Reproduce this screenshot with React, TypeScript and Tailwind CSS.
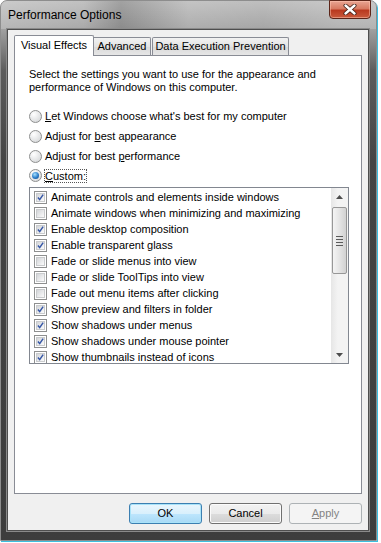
import React from 'react';

const items: { label: string; on: boolean }[] = [
  { label: 'Animate controls and elements inside windows', on: true },
  { label: 'Animate windows when minimizing and maximizing', on: false },
  { label: 'Enable desktop composition', on: true },
  { label: 'Enable transparent glass', on: true },
  { label: 'Fade or slide menus into view', on: false },
  { label: 'Fade or slide ToolTips into view', on: false },
  { label: 'Fade out menu items after clicking', on: false },
  { label: 'Show preview and filters in folder', on: true },
  { label: 'Show shadows under menus', on: true },
  { label: 'Show shadows under mouse pointer', on: true },
  { label: 'Show thumbnails instead of icons', on: true },
];

const CheckBox = ({ on }: { on: boolean }) => (
  <span className="flex-none w-[13px] h-[13px] border border-[#8e8f8f] bg-white p-px">
    <span className="flex items-center justify-center w-full h-full border border-[#c9cbcd] bg-[linear-gradient(135deg,#d3d5d8,#fbfbfb)]">
      {on && (
        <svg width="9" height="9" viewBox="0 0 9 9">
          <polyline points="1.2,4.4 3.5,7.2 7.9,0.8" fill="none" stroke="#3556a6" strokeWidth="1.9" />
        </svg>
      )}
    </span>
  </span>
);

const Radio = ({ on }: { on?: boolean }) => (
  <span className="flex-none flex items-center justify-center w-[13px] h-[13px] rounded-full border border-[#8e8f8f] bg-[radial-gradient(circle_at_35%_30%,#ffffff,#cfd1d3)]">
    {on && (
      <span className="w-[7px] h-[7px] rounded-full bg-[radial-gradient(circle_at_40%_35%,#a6e0ff,#2a7cc8_55%,#0d3f7c)]" />
    )}
  </span>
);

const Arrow = ({ up }: { up?: boolean }) => (
  <svg width="7" height="4" viewBox="0 0 7 4">
    <polygon points={up ? '0,4 7,4 3.5,0' : '0,0 7,0 3.5,4'} fill="#4d4d4d" />
  </svg>
);

export default function App() {
  return (
    <div className="w-[381px] h-[543px] bg-white overflow-hidden font-['Liberation_Sans',Arial,sans-serif] text-[11px] text-black">
      <div className="w-[377px] h-[541px] rounded-t-[7px] border border-[#8d8d8d] shadow-[1px_1px_0_#3cbfe0] flex flex-col bg-[linear-gradient(180deg,#bcbcbc_0px,#a4a4a4_26px,#5c5c5c_70px,#444444_160px,#3d3d3d_100%)]">
        {/* title bar */}
        <div className="h-[28px] flex items-start justify-between rounded-t-[6px] bg-[linear-gradient(90deg,rgba(255,255,255,0.22)_0%,rgba(255,255,255,0.08)_22%,rgba(0,0,0,0.14)_32%,rgba(255,255,255,0.12)_50%,rgba(255,255,255,0.04)_70%,rgba(255,255,255,0.18)_90%)]">
          <span className="ml-[7px] mt-[6px] leading-[16px] text-[12px] text-black">Performance Options</span>
          <div className="-mt-px mr-[5px] w-[42px] h-[19px] rounded-b-[4px] border border-[#5b2418] shadow-[inset_0_0_0_1px_rgba(255,200,180,0.5)] bg-[linear-gradient(180deg,#e9a593_0%,#d77a62_45%,#b9391f_55%,#c95a3c_100%)] flex items-center justify-center">
            <svg width="14" height="11" viewBox="0 0 14 11">
              <path d="M2.5 1.5 L11.5 9.5 M11.5 1.5 L2.5 9.5" stroke="#3a1a12" strokeWidth="4" strokeLinecap="round" />
              <path d="M2.5 1.5 L11.5 9.5 M11.5 1.5 L2.5 9.5" stroke="#ffffff" strokeWidth="2.4" strokeLinecap="round" />
            </svg>
          </div>
        </div>

        {/* dialog body */}
        <div className="ml-[6px] w-[362px] h-[502px] border border-[#4e4e4e] shadow-[0_0_0_1px_#8a8a8a] bg-[#f0f0f0] flex flex-col">
          {/* tabs */}
          <div className="flex items-start pl-[6px] pt-[5px] h-[25px]">
            <div className="relative z-10 w-[80px] h-[21px] border border-b-0 border-[#898c95] bg-white flex items-center justify-center rounded-t-[2px]">
              <span className="-mt-[2px]">Visual Effects</span>
            </div>
            <div className="mt-[2px] w-[57px] h-[18px] border border-l-0 border-b-0 border-[#898c95] bg-[linear-gradient(180deg,#f2f2f2,#e3e3e3_50%,#d9d9d9_51%,#e6e6e6)] flex items-center justify-center rounded-tr-[2px]">
              Advanced
            </div>
            <div className="mt-[2px] ml-px w-[137px] h-[18px] border border-b-0 border-[#898c95] bg-[linear-gradient(180deg,#f2f2f2,#e3e3e3_50%,#d9d9d9_51%,#e6e6e6)] flex items-center justify-center rounded-t-[2px]">
              Data Execution Prevention
            </div>
          </div>

          {/* tab panel */}
          <div className="ml-[6px] w-[348px] h-[439px] border border-[#898c95] bg-white pl-[14px] pt-[12px]">
            <p className="leading-[13px]">
              Select the settings you want to use for the appearance and
              <br />
              performance of Windows on this computer.
            </p>
            <div className="mt-[12px] flex flex-col">
              <div className="h-[20px] flex items-center gap-[3px]">
                <Radio />
                <span><span className="underline">L</span>et Windows choose what's best for my computer</span>
              </div>
              <div className="h-[20px] flex items-center gap-[3px]">
                <Radio />
                <span>Adjust for <span className="underline">b</span>est appearance</span>
              </div>
              <div className="h-[20px] flex items-center gap-[3px]">
                <Radio />
                <span>Adjust for best <span className="underline">p</span>erformance</span>
              </div>
              <div className="h-[19px] flex items-center gap-[2px]">
                <Radio on />
                <span className="border border-dotted border-[#555] leading-[12px]"><span className="underline">C</span>ustom:</span>
              </div>
            </div>

            {/* list */}
            <div className="mt-[2px] w-[320px] h-[177px] border border-[#828790] flex overflow-hidden">
              <div className="flex-1 pt-px overflow-hidden">
                {items.map((it) => (
                  <div key={it.label} className="h-[16px] flex items-center gap-[4px] pl-[4px] whitespace-nowrap">
                    <CheckBox on={it.on} />
                    <span>{it.label}</span>
                  </div>
                ))}
              </div>
              <div className="w-[17px] flex flex-col bg-[linear-gradient(90deg,#e6e6e6,#f3f3f3_40%,#f3f3f3)]">
                <div className="h-[17px] flex items-center justify-center">
                  <Arrow up />
                </div>
                <div className="mt-[2px] ml-px w-[15px] h-[67px] rounded-[2px] border border-[#979797] bg-[linear-gradient(90deg,#f4f4f4,#e4e4e4_50%,#d2d2d2)] flex flex-col items-center justify-center gap-[2px]">
                  <span className="w-[7px] h-px bg-[#5b5b5b]" />
                  <span className="w-[7px] h-px bg-[#5b5b5b]" />
                  <span className="w-[7px] h-px bg-[#5b5b5b]" />
                  <span className="w-[7px] h-px bg-[#5b5b5b]" />
                </div>
                <div className="flex-1" />
                <div className="h-[17px] flex items-center justify-center">
                  <Arrow />
                </div>
              </div>
            </div>
          </div>

          {/* buttons */}
          <div className="mt-[9px] flex justify-end gap-[7px] pr-[6px]">
            <button className="w-[73px] h-[21px] rounded-[3px] border border-[#3c7fb1] shadow-[inset_0_0_0_1px_#a9e3f9] bg-[linear-gradient(180deg,#eaf6fd_0%,#d9f0fc_50%,#bee6fd_51%,#a7d9f5_100%)] text-[11px] leading-none">
              OK
            </button>
            <button className="w-[73px] h-[21px] rounded-[3px] border border-[#707070] shadow-[inset_0_0_0_1px_#fbfbfb] bg-[linear-gradient(180deg,#f2f2f2_0%,#ebebeb_50%,#dddddd_51%,#cfcfcf_100%)] text-[11px] leading-none">
              Cancel
            </button>
            <button className="w-[73px] h-[21px] rounded-[3px] border border-[#adb2b5] bg-[#f4f4f4] text-[11px] leading-none text-[#838383]">
              <span className="underline">A</span>pply
            </button>
          </div>
        </div>
      </div>
    </div>
  );
}
